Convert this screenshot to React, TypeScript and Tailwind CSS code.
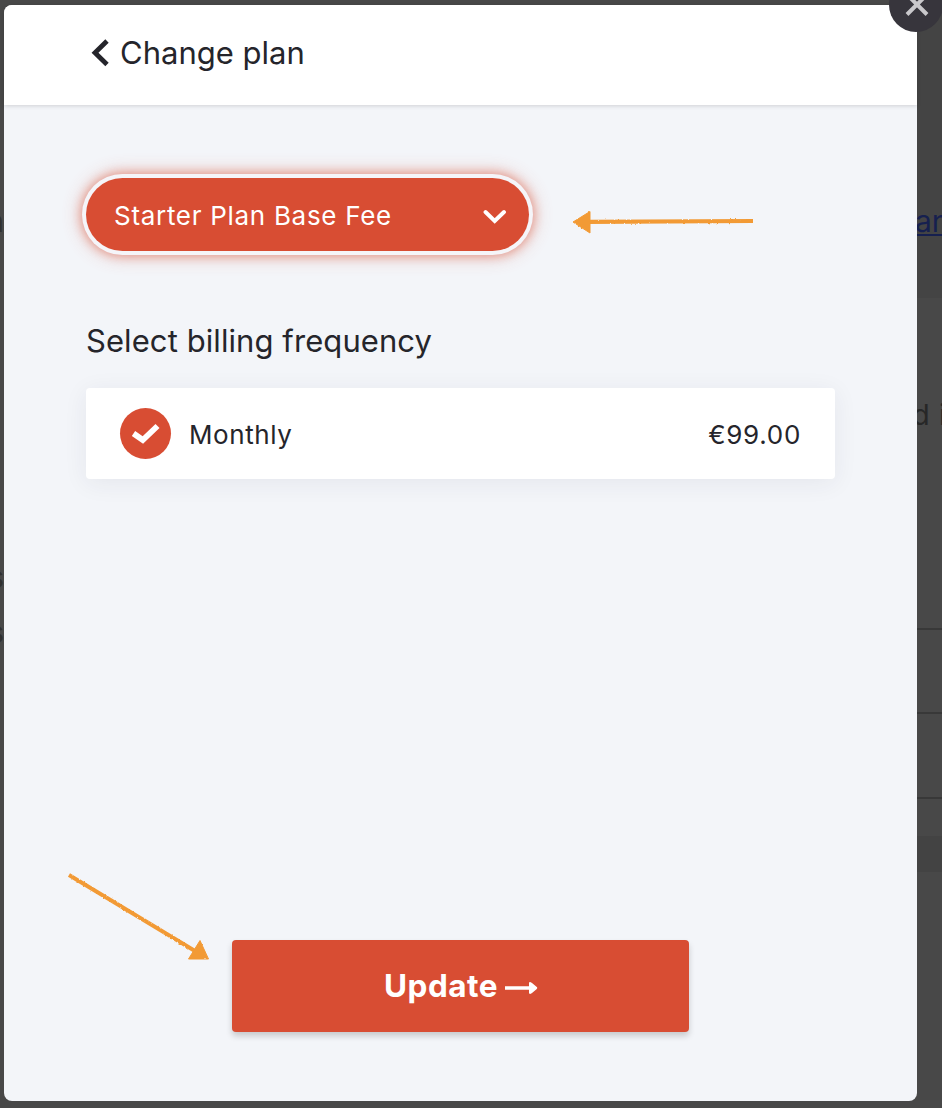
import React from 'react';

function LeftBackdrop() {
  return (
    <div aria-hidden="true" className="flex w-[4px] shrink-0 flex-col items-end overflow-hidden pt-[203px] text-[30px] leading-9 text-[#303030]">
      <span>n</span>
      <span className="mt-[320px]">s</span>
      <span className="mt-[19px]">s</span>
    </div>
  );
}

function RightBackdrop() {
  return (
    <div aria-hidden="true" className="flex w-[25px] shrink-0 flex-col overflow-hidden text-[30px] leading-9 text-[#272727]">
      <div className="flex h-[298px] flex-col bg-[#444444] pt-[203px]">
        <span className="-ml-[2px] h-[33px] border-b-2 border-[#16204f] text-[#16204f]">an</span>
      </div>
      <div className="h-[330px] pt-[99px]">
        <span className="-ml-[5px] block whitespace-pre text-[29px] tracking-[0.6px]">d i</span>
      </div>
      <div className="h-[84px] shrink-0 border-t-2 border-[#383838]" />
      <div className="h-[85px] shrink-0 border-t-2 border-[#383838]" />
      <div className="h-[39px] shrink-0 border-t-2 border-[#383838]" />
      <div className="h-[36px] shrink-0 bg-[#434343]" />
    </div>
  );
}

function Header() {
  return (
    <header className="relative flex h-[100px] shrink-0 items-center rounded-t-[8px] bg-white pb-[4px] pl-[85px] shadow-[0_1px_4px_rgba(0,0,0,0.15)]">
      <svg className="mr-[11px] shrink-0" width="20" height="30" viewBox="0 0 20 30" fill="none">
        <path d="M18 3 L6 14.700 L18 26.500" stroke="#25252b" strokeWidth="4.800" />
      </svg>
      <h1 className="text-[31px] leading-[40px]">Change plan</h1>
    </header>
  );
}

function PlanSelect() {
  return (
    <button className="flex h-[73px] w-[443px] items-center justify-between rounded-full bg-[#d84d33] pl-[28px] pr-[22px] pt-[2px] text-white shadow-[0_0_0_4px_#f5f5f9,0_0_8px_6px_rgba(216,77,51,0.36),0_0_18px_6px_rgba(216,77,51,0.3)]">
      <span className="text-[26px] leading-[34px] tracking-[0.7px]">Starter Plan Base Fee</span>
      <svg width="24" height="20" viewBox="0 0 24 20" fill="none">
        <path d="M2.500 6 L11.700 15 L21 6" stroke="#fff" strokeWidth="3.900" strokeLinecap="round" />
      </svg>
    </button>
  );
}

function BillingOption() {
  return (
    <div className="mt-[27px] flex h-[91px] w-[749px] items-center rounded-[4px] bg-white pl-[34px] pr-[34px] text-[26px] shadow-[0_4px_24px_rgba(40,45,70,0.07)]">
      <div className="flex size-[51px] items-center justify-center rounded-full bg-[#d84d33]">
        <svg width="51" height="51" viewBox="0 0 51 51" fill="none">
          <path d="M13.500 25.500 L22.800 32 L37.500 18" stroke="#fff" strokeWidth="5.800" />
        </svg>
      </div>
      <span className="ml-[18px] mt-[2px] tracking-[0.6px]">Monthly</span>
      <span className="ml-auto mt-[2px] tracking-[0.7px]">€99.00</span>
    </div>
  );
}

function Annotations() {
  return (
    <svg className="pointer-events-none absolute left-0 top-0" width="942" height="1108" viewBox="0 0 942 1108" fill="none">
      <defs>
        <filter id="chalk" x="0" y="0" width="942" height="1108" filterUnits="userSpaceOnUse" colorInterpolationFilters="sRGB">
          <feTurbulence type="fractalNoise" baseFrequency="0.43" numOctaves="2" seed="4" />
          <feDisplacementMap in="SourceGraphic" scale="2.2" xChannelSelector="R" yChannelSelector="G" />
        </filter>
      </defs>
      <g filter="url(#chalk)" stroke="#f29a35" fill="#f29a35">
        <path d="M588 221.800 L753 221" strokeWidth="4.200" />
        <path d="M573 222 L590 211.500 V233 Z" strokeWidth="1" />
        <path d="M69 875 L195 951" strokeWidth="4" />
        <path d="M208.500 959 L200 940.500 L188.500 959 Z" strokeWidth="1" />
      </g>
    </svg>
  );
}

export default function App() {
  return (
    <div className="relative flex h-[1108px] w-[942px] overflow-hidden bg-[#484848] font-['Inter',sans-serif] text-[#25252b]">
      <LeftBackdrop />
      <main className="mt-[5px] flex h-[1096px] w-[913px] shrink-0 flex-col rounded-[8px] bg-[#f3f5f9]">
        <Header />
        <section className="flex flex-1 flex-col items-start pl-[82px] pt-[73px]">
          <PlanSelect />
          <h2 className="mt-[70px] text-[31px] leading-[40px] tracking-[0.08px]">Select billing frequency</h2>
          <BillingOption />
          <button className="mb-[69px] ml-[146px] mt-auto flex h-[92px] w-[457px] items-center justify-center rounded-[4px] bg-[#d84d33] pl-[1px] text-[31.500px] font-bold text-white shadow-[0_4px_6px_rgba(0,0,0,0.18)]">
            <span className="tracking-[0.5px]">Update</span>
            <svg className="ml-[7px] mt-[4px]" width="33" height="16" viewBox="0 0 33 16">
              <path d="M0 6.300 H24 V3.500 Q24 1 27 3 L31.500 6.800 Q33 8 31.500 9.200 L27 13 Q24 15 24 12.500 V9.700 H0 Z" fill="#fff" />
            </svg>
          </button>
        </section>
      </main>
      <RightBackdrop />
      <button aria-label="Close" className="absolute left-[889px] top-[-22px] size-[54px] rounded-full bg-[#37353c]">
        <svg width="54" height="54" viewBox="0 0 54 54" fill="none">
          <path d="M18 16.500 L38 36.500 M38 16.500 L18 36.500" stroke="#c9c8cb" strokeWidth="4" />
        </svg>
      </button>
      <Annotations />
    </div>
  );
}
